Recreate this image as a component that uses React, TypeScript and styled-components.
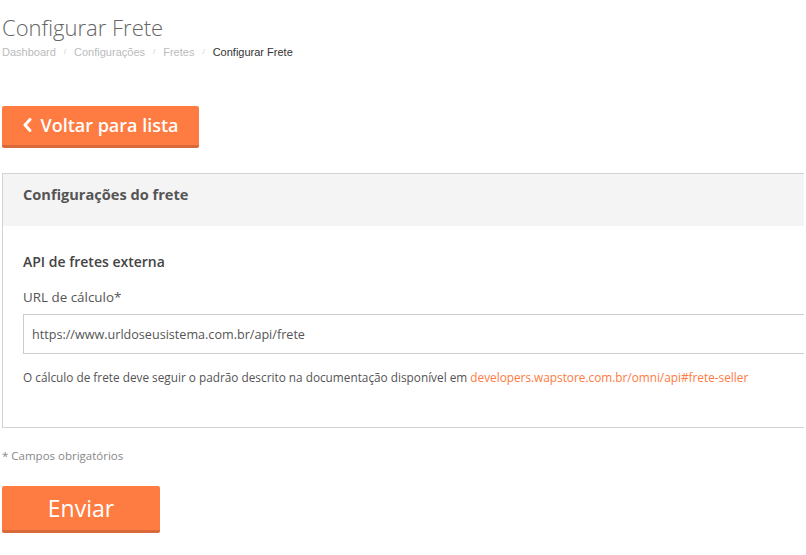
import React from "react";
import styled, { createGlobalStyle } from "styled-components";

const GlobalStyle = createGlobalStyle`
  html, body {
    margin: 0;
    padding: 0;
    background: #fff;
  }
  body {
    font-family: "Open Sans", "Noto Sans", sans-serif;
    color: #555;
  }
`;

const orange = "#fe7b41";
const orangeDark = "#d9683a";

const Page = styled.div`
  width: 802px;
  padding-left: 2px;
  overflow: hidden;
`;

const Title = styled.h1`
  margin: 0;
  padding-top: 12px;
  font-family: "Open Sans", sans-serif;
  font-weight: 300;
  font-size: 22px;
  line-height: 30px;
  color: #666;
`;

const Crumbs = styled.nav`
  display: flex;
  align-items: center;
  gap: 8px;
  margin-top: 3px;
  font-family: "Liberation Sans", Arial, sans-serif;
  font-size: 11px;
  line-height: 14px;
`;

const Crumb = styled.span<{ current?: boolean }>`
  color: ${(p) => (p.current ? "#333" : "#bbb")};
`;

const Sep = styled.span`
  color: #ccc;
  font-size: 8px;
`;

const ActionButton = styled.button<{ big?: boolean }>`
  display: flex;
  align-items: center;
  justify-content: center;
  gap: 7px;
  box-sizing: border-box;
  border: none;
  border-bottom: 3px solid ${orangeDark};
  border-radius: 2px;
  background: ${orange};
  color: #fff;
  font-family: "Open Sans", sans-serif;
  font-weight: ${(p) => (p.big ? 400 : 600)};
  font-size: ${(p) => (p.big ? "23px" : "18px")};
  width: ${(p) => (p.big ? "158px" : "197px")};
  height: ${(p) => (p.big ? "47px" : "42px")};
  padding: 0 0 ${(p) => (p.big ? "0" : "2px")};
  cursor: pointer;
`;

const BackRow = styled.div`
  margin-top: 47px;
`;

const Panel = styled.section`
  margin-top: 25px;
  width: 840px;
  border: 1px solid #d3d3d3;
  box-sizing: border-box;
`;

const PanelHeader = styled.div`
  background: #f4f4f4;
  height: 52px;
  padding-left: 20px;
  display: flex;
  align-items: center;
  font-weight: 700;
  font-size: 14.6px;
  color: #555;
  padding-bottom: 12px;
  box-sizing: border-box;
`;

const PanelBody = styled.div`
  padding: 26px 0 42px 20px;
`;

const Subtitle = styled.h3`
  margin: 0;
  font-weight: 600;
  font-size: 14px;
  line-height: 20px;
  color: #444;
`;

const Label = styled.label`
  display: block;
  margin-top: 16px;
  font-size: 13.4px;
  line-height: 18px;
  color: #555;
`;

const Input = styled.input`
  display: block;
  box-sizing: border-box;
  margin-top: 8px;
  width: 100%;
  height: 40px;
  border: 1px solid #ccc;
  padding: 0 8px;
  font-family: "Open Sans", sans-serif;
  font-size: 12.6px;
  color: #555;
  outline: none;
`;

const Help = styled.p`
  margin: 15px 0 0;
  font-size: 11.8px;
  line-height: 16px;
  color: #555;
`;

const Link = styled.a`
  color: ${orange};
  text-decoration: none;
`;

const Required = styled.p`
  margin: 20px 0 0;
  font-size: 11.5px;
  line-height: 16px;
  color: #888;
`;

const SubmitRow = styled.div`
  margin-top: 22px;
  padding-bottom: 20px;
`;

const Chevron = () => (
  <svg width="11" height="14" viewBox="0 0 11 14">
    <path d="M8 1.5 L3 7 L8 12.5" fill="none" stroke="#fff" strokeWidth="3" strokeLinecap="round" strokeLinejoin="round" />
  </svg>
);

export default function App() {
  return (
    <Page>
      <GlobalStyle />
      <Title>Configurar Frete</Title>
      <Crumbs>
        <Crumb>Dashboard</Crumb>
        <Sep>/</Sep>
        <Crumb>Configurações</Crumb>
        <Sep>/</Sep>
        <Crumb>Fretes</Crumb>
        <Sep>/</Sep>
        <Crumb current>Configurar Frete</Crumb>
      </Crumbs>
      <BackRow>
        <ActionButton>
          <Chevron />
          Voltar para lista
        </ActionButton>
      </BackRow>
      <Panel>
        <PanelHeader>Configurações do frete</PanelHeader>
        <PanelBody>
          <Subtitle>API de fretes externa</Subtitle>
          <Label>URL de cálculo*</Label>
          <Input defaultValue="https://www.urldoseusistema.com.br/api/frete" />
          <Help>
            O cálculo de frete deve seguir o padrão descrito na documentação disponível em{" "}
            <Link href="#">developers.wapstore.com.br/omni/api#frete-seller</Link>
          </Help>
        </PanelBody>
      </Panel>
      <Required>* Campos obrigatórios</Required>
      <SubmitRow>
        <ActionButton big>Enviar</ActionButton>
      </SubmitRow>
    </Page>
  );
}
